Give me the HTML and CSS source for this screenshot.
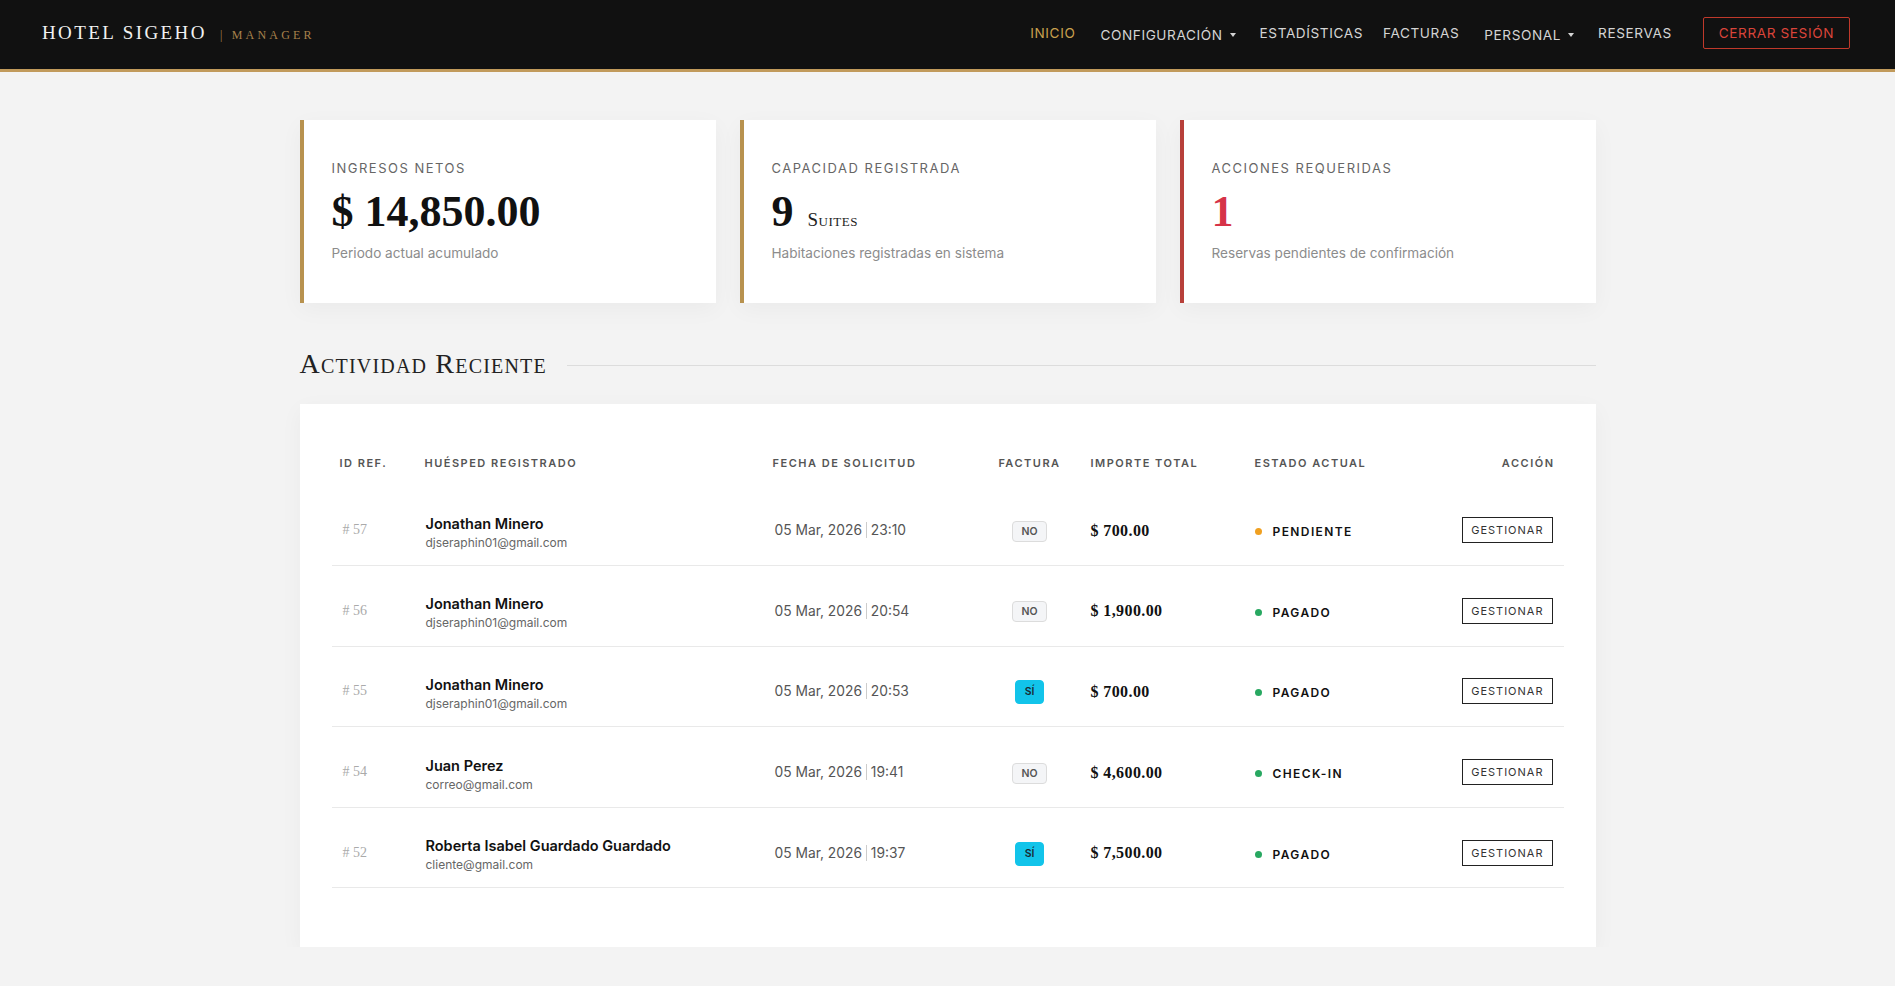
FILE: index.html
```html
<!DOCTYPE html>
<html lang="es">
<head>
    <meta charset="UTF-8">
    <meta name="viewport" content="width=device-width, initial-scale=1.0">
    <title>Hotel Sigeho | Manager</title>
    <link rel="stylesheet" href="styles.css">
</head>
<body>
    <nav class="navbar">
        <a class="brand" href="#">Hotel Sigeho <span class="brand-sub">| Manager</span></a>
        <ul class="nav-links">
            <li><a class="nav-link active" href="#">Inicio</a></li>
            <li><a class="nav-link dropdown" href="#">Configuración</a></li>
            <li><a class="nav-link" href="#">Estadísticas</a></li>
            <li><a class="nav-link" href="#">Facturas</a></li>
            <li><a class="nav-link dropdown" href="#">Personal</a></li>
            <li><a class="nav-link" href="#">Reservas</a></li>
        </ul>
        <a class="btn-logout" href="#">Cerrar Sesión</a>
    </nav>

    <main class="container">
        <section class="stats">
            <div class="stat-card">
                <div class="stat-label">Ingresos Netos</div>
                <div class="stat-value">$ 14,850.00</div>
                <div class="stat-desc">Periodo actual acumulado</div>
            </div>
            <div class="stat-card">
                <div class="stat-label">Capacidad Registrada</div>
                <div class="stat-value">9 <span class="stat-unit">Suites</span></div>
                <div class="stat-desc">Habitaciones registradas en sistema</div>
            </div>
            <div class="stat-card stat-alert">
                <div class="stat-label">Acciones Requeridas</div>
                <div class="stat-value">1</div>
                <div class="stat-desc">Reservas pendientes de confirmación</div>
            </div>
        </section>

        <div class="section-title">
            <h2>Actividad Reciente</h2>
            <span class="section-line"></span>
        </div>

        <section class="table-card">
            <table class="activity">
                <colgroup>
                    <col style="width: 85px">
                    <col style="width: 348px">
                    <col style="width: 212px">
                    <col style="width: 106px">
                    <col style="width: 164px">
                    <col style="width: 175px">
                    <col style="width: 142px">
                </colgroup>
                <thead>
                    <tr>
                        <th>ID Ref.</th>
                        <th>Huésped Registrado</th>
                        <th>Fecha de Solicitud</th>
                        <th class="center">Factura</th>
                        <th>Importe Total</th>
                        <th>Estado Actual</th>
                        <th class="right">Acción</th>
                    </tr>
                </thead>
                <tbody>
                    <tr>
                        <td class="ref"># 57</td>
                        <td class="guest-cell"><div class="guest">Jonathan Minero</div><div class="email">djseraphin01@gmail.com</div></td>
                        <td class="date">05 Mar, 2026 <span class="time">23:10</span></td>
                        <td class="center"><span class="badge badge-no">NO</span></td>
                        <td class="amount">$ 700.00</td>
                        <td><span class="status"><span class="dot dot-pending"></span>Pendiente</span></td>
                        <td class="right"><a class="btn-manage" href="#">Gestionar</a></td>
                    </tr>
                    <tr>
                        <td class="ref"># 56</td>
                        <td class="guest-cell"><div class="guest">Jonathan Minero</div><div class="email">djseraphin01@gmail.com</div></td>
                        <td class="date">05 Mar, 2026 <span class="time">20:54</span></td>
                        <td class="center"><span class="badge badge-no">NO</span></td>
                        <td class="amount">$ 1,900.00</td>
                        <td><span class="status"><span class="dot dot-ok"></span>Pagado</span></td>
                        <td class="right"><a class="btn-manage" href="#">Gestionar</a></td>
                    </tr>
                    <tr>
                        <td class="ref"># 55</td>
                        <td class="guest-cell"><div class="guest">Jonathan Minero</div><div class="email">djseraphin01@gmail.com</div></td>
                        <td class="date">05 Mar, 2026 <span class="time">20:53</span></td>
                        <td class="center"><span class="badge badge-yes">SÍ</span></td>
                        <td class="amount">$ 700.00</td>
                        <td><span class="status"><span class="dot dot-ok"></span>Pagado</span></td>
                        <td class="right"><a class="btn-manage" href="#">Gestionar</a></td>
                    </tr>
                    <tr>
                        <td class="ref"># 54</td>
                        <td class="guest-cell"><div class="guest">Juan Perez</div><div class="email">correo@gmail.com</div></td>
                        <td class="date">05 Mar, 2026 <span class="time">19:41</span></td>
                        <td class="center"><span class="badge badge-no">NO</span></td>
                        <td class="amount">$ 4,600.00</td>
                        <td><span class="status"><span class="dot dot-ok"></span>Check-in</span></td>
                        <td class="right"><a class="btn-manage" href="#">Gestionar</a></td>
                    </tr>
                    <tr>
                        <td class="ref"># 52</td>
                        <td class="guest-cell"><div class="guest">Roberta Isabel Guardado Guardado</div><div class="email">cliente@gmail.com</div></td>
                        <td class="date">05 Mar, 2026 <span class="time">19:37</span></td>
                        <td class="center"><span class="badge badge-yes">SÍ</span></td>
                        <td class="amount">$ 7,500.00</td>
                        <td><span class="status"><span class="dot dot-ok"></span>Pagado</span></td>
                        <td class="right"><a class="btn-manage" href="#">Gestionar</a></td>
                    </tr>
                </tbody>
            </table>
        </section>
    </main>
</body>
</html>
```

FILE: styles.css
```css
body {
    margin: 0;
    padding: 0;
    background-color: #f3f3f3;
    font-family: Inter, "Noto Sans", Arial, sans-serif;
    color: #222;
}

a {
    text-decoration: none;
}

/* barra superior */
.navbar {
    display: flex;
    align-items: center;
    height: 72px;
    box-sizing: border-box;
    padding: 0 45px 4px 42px;
    background-color: #111111;
    border-bottom: 3px solid #c19a5b;
}

.brand {
    font-family: "Liberation Serif", "Times New Roman", serif;
    font-size: 19px;
    letter-spacing: 2.4px;
    text-transform: uppercase;
    color: #f2f2f2;
    margin-right: auto;
}

.brand-sub {
    font-size: 12px;
    letter-spacing: 3.2px;
    color: #a8814c;
    margin-left: 6px;
}

.nav-links {
    display: flex;
    align-items: center;
    list-style: none;
    margin: 0;
    padding: 0;
}

.nav-link {
    display: block;
    padding: 0 10px;
    font-size: 13.6px;
    letter-spacing: 0.6px;
    text-transform: uppercase;
    color: #d4d4d4;
}

.nav-link.active {
    color: #c9a04e;
}

.nav-link.dropdown {
    padding: 4px 14px 0 15px;
}

.nav-link.dropdown::after {
    content: "";
    display: inline-block;
    margin-left: 7px;
    vertical-align: 3px;
    border-top: 4px solid #d4d4d4;
    border-left: 3px solid transparent;
    border-right: 3px solid transparent;
}

.btn-logout {
    margin-left: 21px;
    padding: 7px 15px;
    border: 1px solid #c0392b;
    border-radius: 2px;
    font-size: 13.6px;
    letter-spacing: 0.6px;
    text-transform: uppercase;
    color: #d9443a;
}

/* contenido */
.container {
    width: 1296px;
    margin: 0 auto;
    padding-top: 48px;
}

.stats {
    display: grid;
    grid-template-columns: repeat(3, 1fr);
    gap: 24px;
}

.stat-card {
    height: 183px;
    box-sizing: border-box;
    padding: 38px 28px 0 28px;
    background-color: #ffffff;
    border-left: 4px solid #b8924f;
    box-shadow: 0 6px 22px rgba(0, 0, 0, 0.04);
}

.stat-card.stat-alert {
    border-left-color: #b8403a;
}

.stat-label {
    font-size: 13px;
    letter-spacing: 1.5px;
    text-transform: uppercase;
    color: #666;
    line-height: 20px;
}

.stat-value {
    font-family: "Liberation Serif", "Times New Roman", serif;
    font-weight: bold;
    font-size: 44px;
    line-height: 50px;
    color: #111;
    margin-top: 9px;
}

.stat-alert .stat-value {
    color: #d63348;
}

.stat-unit {
    font-weight: normal;
    font-size: 19px;
    line-height: 1;
    font-variant: small-caps;
    letter-spacing: 0.5px;
    margin-left: 3px;
    color: #222;
}

.stat-desc {
    font-size: 13.6px;
    color: #8c8c8c;
    margin-top: 8px;
}

.section-title {
    display: flex;
    align-items: center;
    margin-top: 44px;
    height: 36px;
}

.section-title h2 {
    margin: 0;
    font-family: "Liberation Serif", "Times New Roman", serif;
    font-weight: normal;
    font-size: 28px;
    font-variant: small-caps;
    letter-spacing: 1.2px;
    color: #222;
    position: relative;
    top: -1px;
}

.section-line {
    flex: 1;
    height: 1px;
    margin-left: 20px;
    background-color: #dcdcdc;
}

.table-card {
    margin-top: 21px;
    padding: 36px 32px 43px 32px;
    background-color: #ffffff;
    box-shadow: 0 6px 22px rgba(0, 0, 0, 0.04);
}

.activity {
    width: 100%;
    table-layout: fixed;
    border-collapse: collapse;
    margin-bottom: 16px;
}

.activity th {
    height: 45px;
    padding: 0 8px;
    text-align: left;
    font-size: 11px;
    font-weight: 600;
    letter-spacing: 1.5px;
    text-transform: uppercase;
    color: #555;
    vertical-align: middle;
}

.activity th.right {
    padding-right: 9px;
}

.activity td {
    height: 80.6px;
    padding: 10px 8px 0 8px;
    box-sizing: border-box;
    border-bottom: 1px solid #e9e9e9;
    vertical-align: middle;
    font-size: 14px;
}

.activity td.guest-cell {
    padding-top: 14px;
}

.activity td.center {
    text-align: center;
    padding-top: 12px;
}

.activity .center {
    text-align: center;
}

.activity .right {
    text-align: right;
}

.activity td.right {
    padding-right: 11px;
}

.ref {
    font-family: "Liberation Serif", "Times New Roman", serif;
    color: #aaa;
    padding-left: 11px !important;
}

.guest {
    font-weight: 600;
    font-size: 14.5px;
    color: #111;
    padding-left: 1px;
}

.email {
    font-size: 12px;
    color: #666;
    margin-top: 3px;
    padding-left: 1px;
}

.date {
    color: #555;
    font-size: 13.8px !important;
    padding-left: 10px !important;
}

.time {
    border-left: 1px solid #ccc;
    padding-left: 4px;
    margin-left: 0;
}

.badge {
    display: inline-block;
    font-size: 10.5px;
    font-weight: 600;
    border-radius: 4px;
    line-height: 17px;
}

.badge-no {
    padding: 1px 8px;
    color: #555;
    background-color: #f4f5f7;
    border: 1px solid #dcdcdc;
}

.badge-yes {
    padding: 2px 9px;
    line-height: 18px;
    color: #1a2a33;
    background-color: #12c4ea;
    border: 1px solid #12c4ea;
}

.amount {
    font-family: "Liberation Serif", "Times New Roman", serif;
    font-weight: bold;
    font-size: 16px !important;
    letter-spacing: 0.4px;
    color: #111;
    padding-top: 11px !important;
}

.status {
    display: inline-flex;
    align-items: center;
    font-size: 12px;
    font-weight: 600;
    letter-spacing: 1.4px;
    text-transform: uppercase;
    color: #111;
}

.dot {
    width: 7px;
    height: 7px;
    border-radius: 50%;
    margin-right: 11px;
}

.dot-pending {
    background-color: #f0a020;
}

.dot-ok {
    background-color: #28a861;
}

.btn-manage {
    display: inline-block;
    padding: 5px 8px;
    border: 1px solid #222;
    font-size: 11px;
    letter-spacing: 1px;
    text-transform: uppercase;
    color: #333;
}
```
